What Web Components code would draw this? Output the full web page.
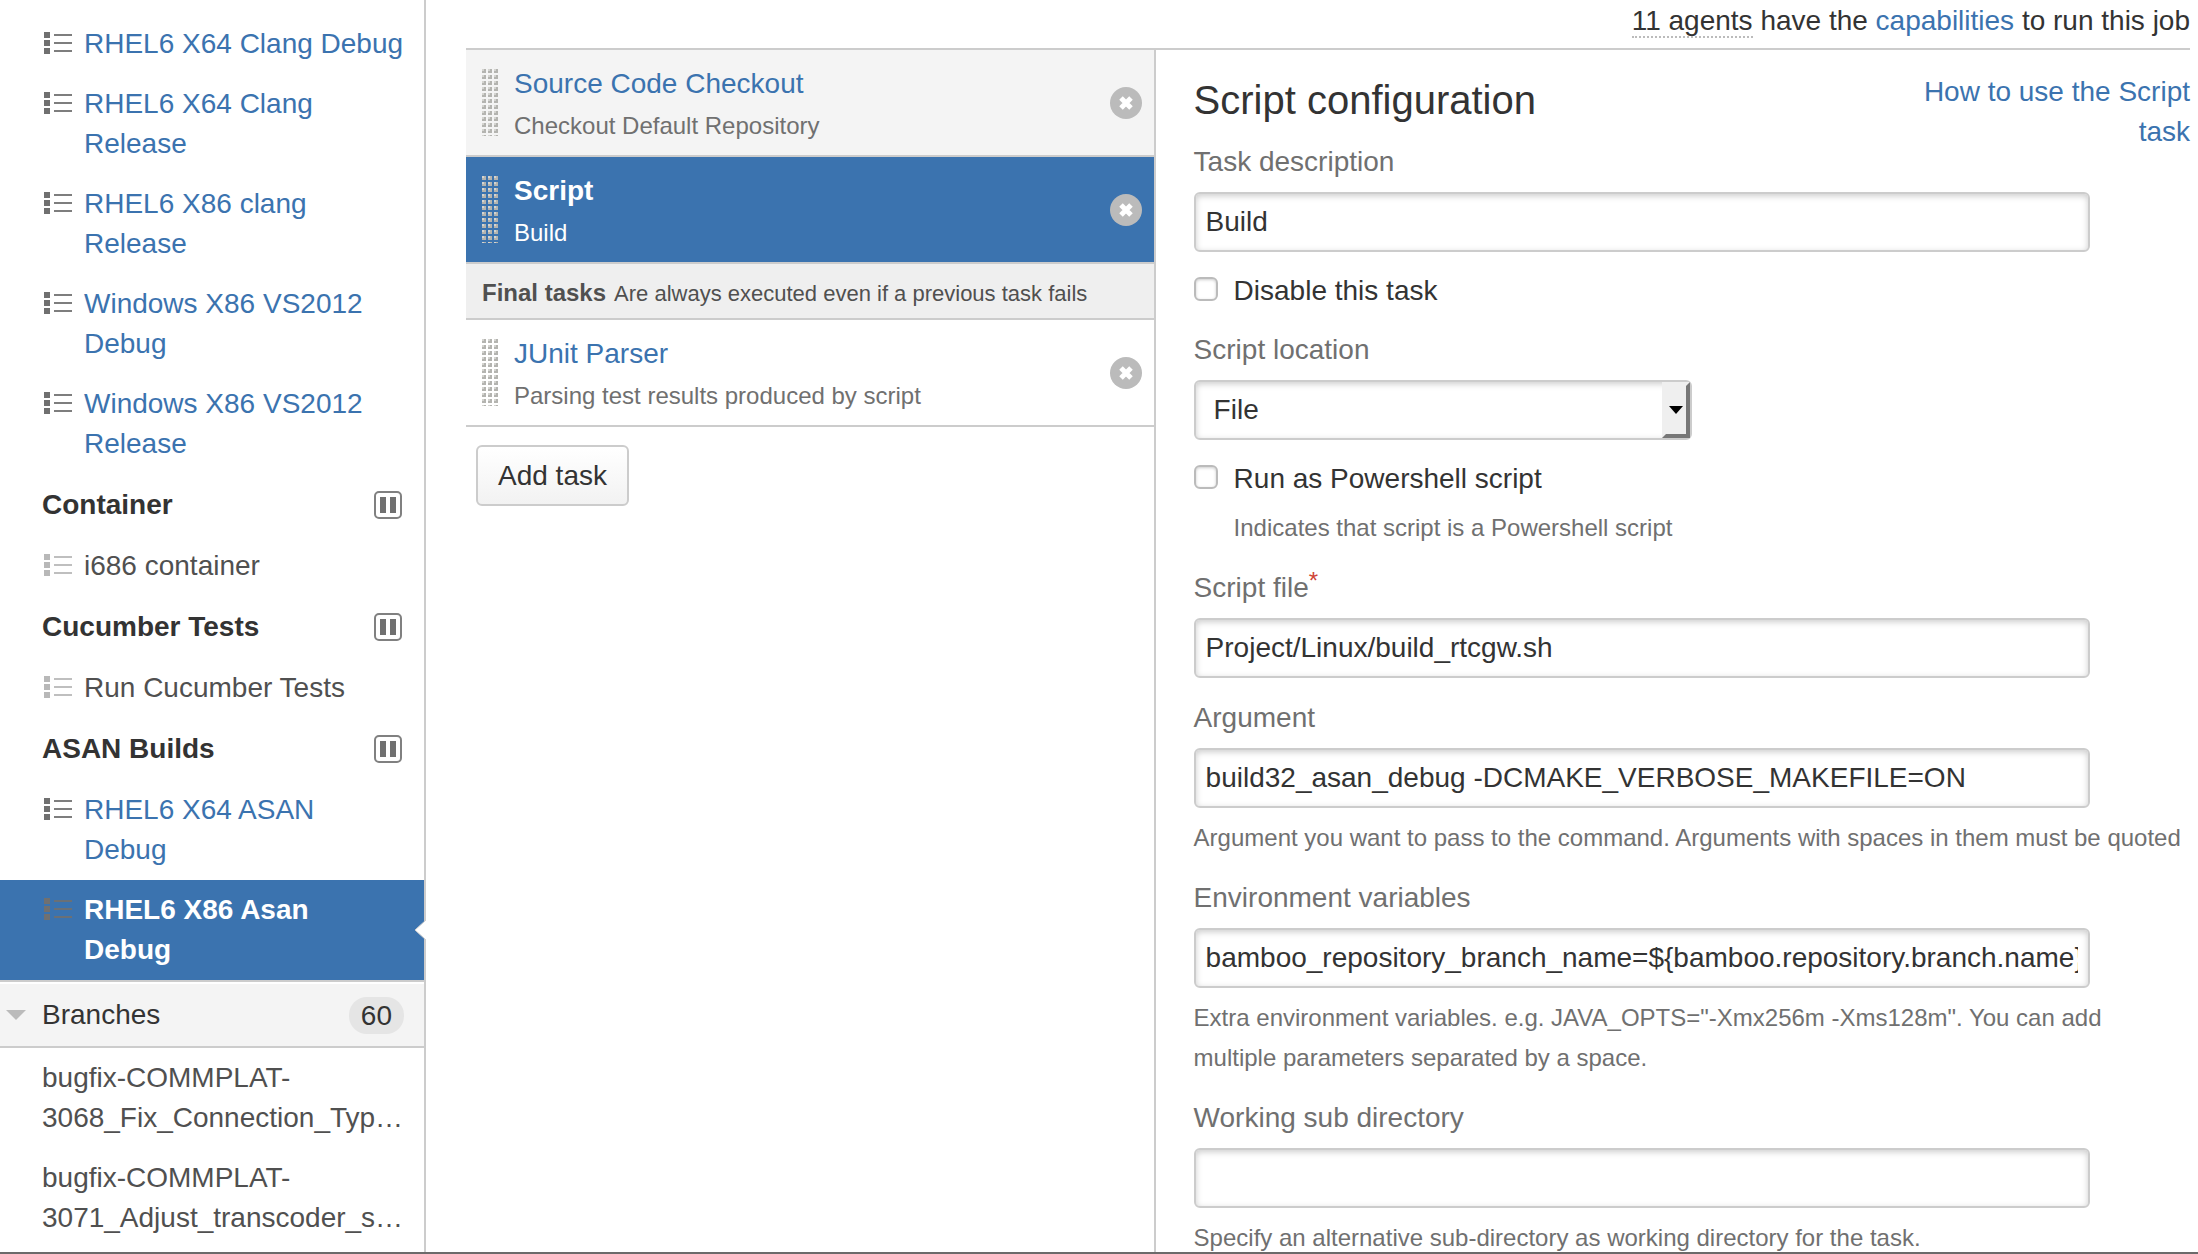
<!DOCTYPE html>
<html lang="en">
<head>
<meta charset="utf-8">
<title>Job configuration: tasks</title>
<style>
  html, body { margin: 0; height: 100%; }
  body {
    --link: #3b73af; --line: #ccc; --muted: #707070; --soft: #505050;
    font: 28px/40px "Liberation Sans", Arial, sans-serif;
    color: #333; background: #fff; overflow: hidden;
  }
</style>
</head>
<body>
<build-page>
  <job-sidebar slot="side">
    <job-link>RHEL6 X64 Clang Debug</job-link>
    <job-link>RHEL6 X64 Clang Release</job-link>
    <job-link>RHEL6 X86 clang Release</job-link>
    <job-link>Windows X86 VS2012 Debug</job-link>
    <job-link>Windows X86 VS2012 Release</job-link>
    <stage-title>Container</stage-title>
    <job-link disabled>i686 container</job-link>
    <stage-title>Cucumber Tests</stage-title>
    <job-link disabled>Run Cucumber Tests</job-link>
    <stage-title>ASAN Builds</stage-title>
    <job-link>RHEL6 X64 ASAN Debug</job-link>
    <job-link selected>RHEL6 X86 Asan Debug</job-link>
    <branch-header count="60">Branches</branch-header>
    <branch-link first="bugfix-COMMPLAT-" rest="3068_Fix_Connection_Typ…"></branch-link>
    <branch-link first="bugfix-COMMPLAT-" rest="3071_Adjust_transcoder_s…"></branch-link>
  </job-sidebar>
  <agent-bar slot="top"></agent-bar>
  <task-list slot="tasks">
    <task-item shaded name="Source Code Checkout" note="Checkout Default Repository"></task-item>
    <task-item selected name="Script" note="Build"></task-item>
    <final-tasks></final-tasks>
    <task-item name="JUnit Parser" note="Parsing test results produced by script"></task-item>
  </task-list>
  <task-form slot="form">
    <text-field label="Task description" value="Build"></text-field>
    <check-field label="Disable this task"></check-field>
    <select-field label="Script location" value="File"></select-field>
    <check-field label="Run as Powershell script" note="Indicates that script is a Powershell script"></check-field>
    <text-field label="Script file" value="Project/Linux/build_rtcgw.sh" required></text-field>
    <text-field label="Argument" value="build32_asan_debug -DCMAKE_VERBOSE_MAKEFILE=ON" note="Argument you want to pass to the command. Arguments with spaces in them must be quoted"></text-field>
    <text-field label="Environment variables" value="bamboo_repository_branch_name=${bamboo.repository.branch.name}" note='Extra environment variables. e.g. JAVA_OPTS="-Xmx256m -Xms128m". You can add multiple parameters separated by a space.'></text-field>
    <text-field label="Working sub directory" value="" note="Specify an alternative sub-directory as working directory for the task."></text-field>
  </task-form>
</build-page>

<script>
const base = `
  :host, *, *::before, *::after { box-sizing: border-box; }
  :host { display: block; }
  a { color: var(--link); text-decoration: none; }
  svg { display: block; }
`;
function define(name, render) {
  customElements.define(name, class extends HTMLElement {
    constructor() { super(); this.attachShadow({ mode: 'open' }); }
    connectedCallback() {
      const t = document.createElement('template');
      t.innerHTML = render(this);
      this.shadowRoot.replaceChildren(t.content.cloneNode(true));
    }
  });
}
const attr = (el, n) => (el.getAttribute(n) || '').replace(/&/g, '&amp;').replace(/"/g, '&quot;').replace(/</g, '&lt;');

define('build-page', () => `<style>${base}
  :host { display: flex; flex-direction: column; height: 100vh; overflow: hidden; }
  .cols { flex: 1; min-height: 0; display: flex; overflow: hidden; }
  main { flex: 1; min-width: 0; padding: 0 8px 0 40px; display: flex; flex-direction: column; }
  .panes { flex: 1; display: flex; border-top: 2px solid var(--line); min-height: 0; }
  slot[name=tasks]::slotted(*) { flex: 0 0 40%; }
  slot[name=form]::slotted(*) { flex: 1; min-width: 0; }
  .edge { height: 2px; background: #6c6a6a; flex: none; }
</style>
<div class="cols"><slot name="side"></slot>
<main><slot name="top"></slot><div class="panes"><slot name="tasks"></slot><slot name="form"></slot></div></main></div>
<div class="edge"></div>`);

define('job-sidebar', () => `<style>${base}
  :host { flex: 0 0 426px; border-right: 2px solid var(--line); padding-top: 14px; }
</style><nav><slot></slot></nav>`);

define('job-link', () => `<style>${base}
  a { display: flex; gap: 12px; padding: 10px 20px 10px 44px; position: relative; }
  svg { flex: none; margin-top: 8px; fill: #707070; }
  :host([disabled]) a { color: var(--soft); }
  :host([disabled]) svg { fill: #b8b8b8; }
  :host([selected]) a { padding-right: 32px; background: var(--link); color: #fff; font-weight: bold; }
  .tip { display: none; }
  :host([selected]) .tip { display: block; position: absolute; right: -2px; top: 50%; margin: -10px 0 0; }
</style><a href="#"><svg width="28" height="22"><path d="M0 0h6v6H0zM0 8h6v6H0zM0 16h6v6H0z"/><path fill-opacity=".9" d="M10 2h18v2H10zM10 10h18v2H10zM10 18h18v2H10z"/></svg><span><slot></slot></span>
<svg class="tip" width="12" height="20"><path fill="#fff" d="M12 0v20L1 10z"/><path fill="none" stroke="#ccc" d="M12 0L1 10l11 10"/></svg></a>`);

define('stage-title', () => `<style>${base}
  h3 { margin: 0; font: inherit; font-weight: bold; display: flex; justify-content: space-between; align-items: center; padding: 11px 22px 11px 42px; }
</style><h3><slot></slot><svg width="28" height="28"><rect x="1" y="1" width="26" height="26" rx="4" fill="none" stroke="#808080" stroke-width="2"/><path fill="#707070" d="M6 6h6v16H6zM16 6h6v16h-6z"/></svg></h3>`);

define('branch-header', el => `<style>${base}
  :host { border-top: 2px solid var(--line); border-bottom: 2px solid var(--line); padding-top: 2px; }
  div { background: #f4f4f4; display: flex; align-items: center; height: 62px; padding: 0 20px 0 6px; }
  svg { margin-right: 16px; }
  .n { margin-left: auto; background: #e5e5e5; border-radius: 18px; padding: 0 12px; line-height: 37px; }
</style><div><svg width="20" height="10"><path fill="#bbb" d="M0 0h20L10 10z"/></svg><slot></slot><span class="n">${attr(el, 'count')}</span></div>`);

define('branch-link', el => `<style>${base}
  a { display: block; padding: 10px 20px 10px 42px; color: var(--soft); }
  span { display: block; white-space: nowrap; }
</style><a href="#"><span>${attr(el, 'first')}</span><span>${attr(el, 'rest')}</span></a>`);

define('agent-bar', () => `<style>${base}
  :host { height: 48px; padding-top: 1px; text-align: right; white-space: nowrap; flex: none; }
  abbr { text-decoration: none; border-bottom: 2px dotted #bbb; }
</style><abbr title="Available agents">11 agents</abbr> have the <a href="#">capabilities</a> to run this job`);

define('task-list', () => `<style>${base}
  :host { border-right: 2px solid var(--line); }
  button { font: inherit; color: inherit; margin: 18px 10px; height: 61px; padding: 0 20px; border: 2px solid var(--line); border-radius: 6px; background: linear-gradient(#fff, #f2f2f2); }
</style><slot></slot><button type="button">Add task</button>`);

define('task-item', el => `<style>${base}
  :host { border-bottom: 2px solid var(--line); }
  .row { display: flex; align-items: center; height: 105px; padding: 0 12px 0 16px; gap: 16px; }
  :host([shaded]) .row { background: #f4f4f4; }
  :host([selected]) .row { background: var(--link); }
  .text { flex: 1; padding-top: 6px; }
  .text a, .text span { display: block; }
  .text span { font-size: 24px; line-height: 44px; color: var(--muted); }
  :host([selected]) a { font-weight: bold; color: #fff; }
  :host([selected]) .text span { color: #fff; }
  button { border: 0; padding: 0; background: none; }
</style><div class="row">
<svg width="16" height="67"><defs><pattern id="d" width="6" height="6" patternUnits="userSpaceOnUse"><path fill="#d4d4d0" d="M0 0h4v4H0z"/><path fill="#b4b4b0" d="M2 0h2v4H0V2h2z"/></pattern></defs><rect width="16" height="67" fill="url(#d)"/></svg>
<div class="text"><a href="#">${attr(el, 'name')}</a><span>${attr(el, 'note')}</span></div>
<button type="button" aria-label="Remove task"><svg width="32" height="32"><circle cx="16" cy="16" r="16" fill="#bbb"/><path d="M11 11l10 10M21 11L11 21" stroke="#fff" stroke-width="5"/></svg></button></div>`);

define('final-tasks', () => `<style>${base}
  :host { display: flex; align-items: baseline; gap: 8px; background: #efefef; color: var(--soft); border-bottom: 2px solid var(--line); padding: 9px 16px 4px; white-space: nowrap; font-size: 22px; }
  h3 { font-size: 24px; margin: 0; }
</style><h3>Final tasks</h3><span>Are always executed even if a previous task fails</span>`);

define('task-form', () => `<style>${base}
  :host { padding: 20px 0 0 38px; }
  header { display: flex; justify-content: space-between; align-items: flex-start; height: 72px; }
  h2 { font-size: 40px; line-height: 60px; font-weight: normal; margin: 0; white-space: nowrap; }
  header a { width: 30%; padding-top: 2px; text-align: right; }
  form { display: flex; flex-direction: column; gap: 20px; }
</style><header><h2>Script configuration</h2><a href="#">How to use the Script task</a></header><form><slot></slot></form>`);

const field = `
  label { display: block; color: var(--muted); margin-bottom: 10px; }
  input, select { display: block; font: inherit; color: #333; height: 60px; border: 2px solid var(--line); border-radius: 6px; background: #fff; box-shadow: inset 0 2px 6px #ccc; margin: 0; outline: 0; }
  p { margin: 10px 0 0; font-size: 24px; color: var(--muted); }
`;
define('text-field', el => `<style>${base}${field}
  input { width: 90%; padding: 0 10px; }
  sup { color: #d04437; font-size: 24px; line-height: 0; vertical-align: 8px; }
</style><label for="f">${attr(el, 'label')}${el.hasAttribute('required') ? '<sup>*</sup>' : ''}</label>
<input id="f" type="text" value="${attr(el, 'value')}">${el.hasAttribute('note') ? `<p>${attr(el, 'note')}</p>` : ''}`);

define('select-field', el => `<style>${base}${field}
  .box { display: grid; width: 50%; }
  .box > * { grid-area: 1 / 1; }
  select { appearance: none; width: 100%; padding: 0 40px 0 18px; }
  svg { justify-self: end; align-self: center; pointer-events: none; }
</style><label for="f">${attr(el, 'label')}</label>
<div class="box"><select id="f"><option>${attr(el, 'value')}</option></select>
<svg width="30" height="58"><path fill="#efefef" d="M0 1h28v56H0z"/><path fill="#777" d="M24 5l4-4v56H0l4-4h20z"/><path d="M7 25h14l-7 8z"/></svg></div>`);

define('check-field', el => `<style>${base}${field}
  .row { display: flex; align-items: center; gap: 16px; height: 38px; }
  label { color: #333; margin: 0; }
  input { appearance: none; width: 24px; height: 24px; border: 2px solid #bbb; margin-bottom: 4px; box-shadow: inset 0 1px 3px #ccc; }
  p { margin-left: 40px; }
</style><div class="row"><input id="f" type="checkbox"><label for="f">${attr(el, 'label')}</label></div>${el.hasAttribute('note') ? `<p>${attr(el, 'note')}</p>` : ''}`);
</script>
</body>
</html>
